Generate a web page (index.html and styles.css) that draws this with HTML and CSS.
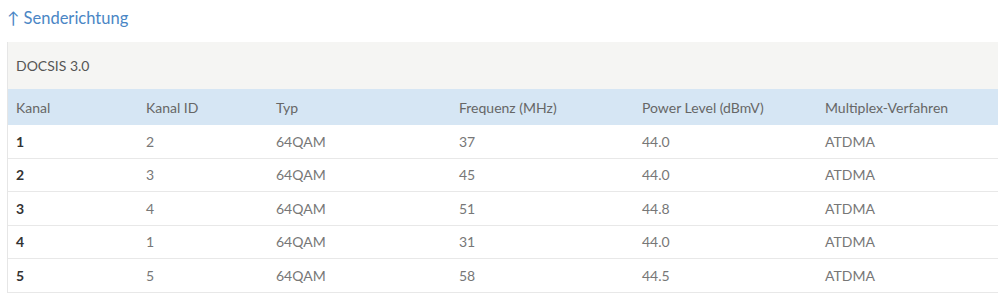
FILE: index.html
```html
<!DOCTYPE html>
<html lang="de">
<head>
<meta charset="utf-8">
<link rel="stylesheet" href="styles.css">
</head>
<body>
<h2 class="title">↑ Senderichtung</h2>
<div class="panel">
  <div class="caption">DOCSIS 3.0</div>
  <table class="grid">
    <colgroup>
      <col class="c1"><col class="c2"><col class="c3"><col class="c4"><col class="c5"><col>
    </colgroup>
    <thead>
      <tr><th>Kanal</th><th>Kanal ID</th><th>Typ</th><th>Frequenz (MHz)</th><th>Power Level (dBmV)</th><th>Multiplex-Verfahren</th></tr>
    </thead>
    <tbody>
      <tr><td class="k">1</td><td>2</td><td>64QAM</td><td>37</td><td>44.0</td><td>ATDMA</td></tr>
      <tr><td class="k">2</td><td>3</td><td>64QAM</td><td>45</td><td>44.0</td><td>ATDMA</td></tr>
      <tr><td class="k">3</td><td>4</td><td>64QAM</td><td>51</td><td>44.8</td><td>ATDMA</td></tr>
      <tr><td class="k">4</td><td>1</td><td>64QAM</td><td>31</td><td>44.0</td><td>ATDMA</td></tr>
      <tr><td class="k">5</td><td>5</td><td>64QAM</td><td>58</td><td>44.5</td><td>ATDMA</td></tr>
    </tbody>
  </table>
</div>
</body>
</html>
```
FILE: styles.css
```css
html, body { margin: 0; padding: 0; background: #fff; }
body { font-family: Lato, "Open Sans", sans-serif; color: #666; overflow: hidden; }
.title { margin: 0; padding: 7px 0 0 7px; height: 42px; box-sizing: border-box; font-size: 16.5px; font-weight: 400; color: #4a86c5; line-height: 22px; }
.panel { margin-left: 7px; border-left: 1px solid #e6e6e6; width: 1000px; }
.caption { height: 47px; background: #f5f5f3; font-size: 14px; line-height: 47px; padding-left: 8px; color: #555; }
.grid { border-collapse: collapse; width: 100%; table-layout: fixed; font-size: 14px; }
.c1 { width: 130px; } .c2 { width: 130px; } .c3 { width: 183px; } .c4 { width: 183px; } .c5 { width: 183px; }
.grid th { background: #d6e6f4; font-weight: 400; text-align: left; height: 36px; padding: 0 0 0 8px; color: #666; }
.grid td { height: 32.5px; padding: 0 0 0 8px; border-bottom: 1px solid #e8e8e8; color: #777; }
.grid td.k { color: #333; font-weight: 700; }
```
